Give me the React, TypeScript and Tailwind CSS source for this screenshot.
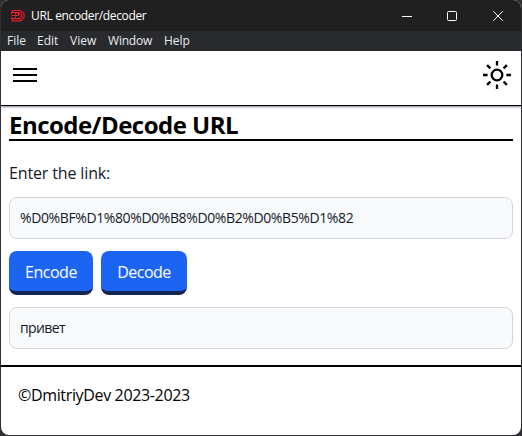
import React from "react";

const menus = [
  { label: "File", cls: "w-[30px]" },
  { label: "Edit", cls: "w-[33px]" },
  { label: "View", cls: "w-[38px]" },
  { label: "Window", cls: "w-[56px] tracking-[-0.2px]" },
  { label: "Help", cls: "w-[30px]" },
];

function Logo() {
  return (
    <svg width="16" height="16" viewBox="0 0 16 16" fill="none" stroke="#ed1c2e" strokeWidth="1.2">
      <path d="M3.5 4.5V2.5H11L15 5.5V9.5L11.5 12.8H3.5V10.5M6.5 4.7H10.2L12.5 6.5V8.7L10.2 10.6H6.5M2 4.5H6.5V6.5M2.5 7.5H10M2 10.5H6.5V8.5M9.5 5V7.5M2.5 4.5V6M2.5 9V10.5" />
    </svg>
  );
}

function TitleBar() {
  return (
    <div className="flex h-[31px] shrink-0 items-center bg-[#202020] pl-2 text-white">
      <Logo />
      <span className="ml-[6px] text-[12px] leading-4 tracking-[-0.35px]">URL encoder/decoder</span>
      <svg className="ml-auto mr-[15px]" width="104" height="12" viewBox="0 0 104 12" fill="none" stroke="white">
        <path d="M0 6.5H10" />
        <rect x="45.5" y="1.5" width="9" height="9" rx="1" />
        <path d="M91.2 1.2L100.8 10.8M100.8 1.2L91.2 10.8" />
      </svg>
    </div>
  );
}

function Sun() {
  return (
    <svg width="30" height="30" viewBox="0 0 30 30" fill="none" stroke="black" strokeWidth="2">
      <circle cx="15" cy="15" r="5.3" strokeWidth="2.3" />
      <path d="M15 1V5.6M15 24.4V29M1 15H5.6M24.4 15H29M5.1 5.1L8.4 8.4M21.6 21.6L24.9 24.9M5.1 24.9L8.4 21.6M21.6 8.4L24.9 5.1" strokeWidth="2.3" />
    </svg>
  );
}

function ActionButton({ label, cls }: { label: string; cls: string }) {
  return (
    <button className={`h-[44px] rounded-lg border-b-4 border-[#172554] bg-[#1c64f2] pt-px text-[16px] leading-6 text-white ${cls}`}>
      {label}
    </button>
  );
}

export default function App() {
  return (
    <div className="h-[436px] w-[522px] bg-[#303034] pr-px pb-px pl-px font-['Open_Sans','Noto_Sans',sans-serif]">
      <div className="flex h-[435px] flex-col overflow-hidden rounded-lg bg-white text-black">
        <TitleBar />
        <nav className="flex h-5 shrink-0 items-center bg-[#292a2d] pl-[6px] text-[12px] leading-5 text-[#e8eaed]">
          {menus.map((m) => (
            <span key={m.label} className={m.cls}>{m.label}</span>
          ))}
        </nav>
        <header className="flex h-[55px] shrink-0 items-center justify-between border-b border-black pr-[9px] pb-[6px] pl-3 shadow-[0_1px_2px_rgba(0,0,40,0.5)]">
          <svg width="24" height="14" viewBox="0 0 24 14" stroke="black" strokeWidth="2">
            <path d="M0 1H24M0 7H24M0 13H24" />
          </svg>
          <Sun />
        </header>
        <main className="flex flex-col px-2">
          <h1 className="h-[35px] border-b-2 border-black pt-[3px] text-[24px] leading-8 font-bold tracking-[-0.53px]">Encode/Decode URL</h1>
          <label className="mt-5 h-6 text-[16px] leading-6 font-medium tracking-[-0.14px] text-[#111827]">Enter the link:</label>
          <div className="mt-3 h-[42px] rounded-lg border border-[#d1d5db] bg-[#f9fafb] px-[10px] text-[14px] leading-10 tracking-[-0.39px] text-[#111827]">
            %D0%BF%D1%80%D0%B8%D0%B2%D0%B5%D1%82
          </div>
          <div className="mt-3 flex gap-2">
            <ActionButton label="Encode" cls="w-[84px] tracking-[-0.5px]" />
            <ActionButton label="Decode" cls="w-[86px] tracking-[-0.5px]" />
          </div>
          <div className="mt-3 h-[42px] rounded-lg border border-[#d1d5db] bg-[#f9fafb] px-[10px] text-[14px] leading-10 tracking-[-0.6px] text-[#111827]">
            привет
          </div>
        </main>
        <footer className="mt-4 border-t-2 border-black pt-4 pl-[17px] text-[16px] leading-6 tracking-[-0.35px]">
          ©DmitriyDev 2023-2023
        </footer>
      </div>
    </div>
  );
}
